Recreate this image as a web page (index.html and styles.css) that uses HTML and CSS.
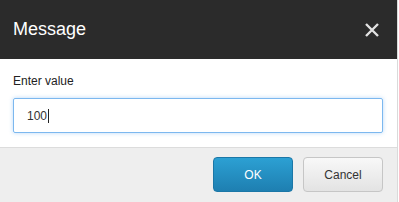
FILE: index.html
```html
<!DOCTYPE html>
<html>
<head>
<meta charset="utf-8">
<link rel="stylesheet" href="styles.css">
</head>
<body>
<div class="dialog">
  <div class="header">
    <div class="title">Message</div>
    <button class="close" aria-label="Close">
      <svg width="14" height="14" viewBox="0 0 14 14"><path d="M1 1 L13 13 M13 1 L1 13" stroke="#e2e2e2" stroke-width="2.4" fill="none"/></svg>
    </button>
  </div>
  <div class="content">
    <label class="label">Enter value</label>
    <div class="field" role="textbox">100<span class="caret"></span></div>
  </div>
  <div class="footer">
    <button class="btn btn-primary">OK</button>
    <button class="btn btn-default">Cancel</button>
  </div>
</div>
</body>
</html>
```
FILE: styles.css
```css
html, body {
  margin: 0;
  padding: 0;
  background: #fff;
}
body {
  width: 399px;
  height: 202px;
  overflow: hidden;
  font-family: "Liberation Sans", Arial, sans-serif;
}
.dialog {
  width: 398px;
  height: 202px;
  box-sizing: border-box;
  border-right: 1px solid #dadada;
  display: flex;
  flex-direction: column;
}
.header {
  height: 59px;
  flex: none;
  background: #2b2b2b;
  display: flex;
  align-items: center;
  padding: 0 18px 0 13px;
}
.title {
  color: #fff;
  font-size: 18px;
  flex: 1;
}
.close {
  background: none;
  border: 0;
  padding: 0;
  width: 14px;
  height: 14px;
  display: flex;
}
.content {
  background: #fff;
  padding: 15px 14px 14px 13px;
  display: flex;
  flex-direction: column;
  border-bottom: 1px solid #dcdcdc;
}
.label {
  font-size: 12px;
  line-height: 14px;
  color: #222;
  margin-bottom: 10px;
}
.field {
  box-sizing: border-box;
  width: 370px;
  height: 35px;
  border: 1px solid #7cb8ef;
  border-radius: 2px;
  box-shadow: 0 0 4px rgba(100, 170, 240, 0.45);
  padding: 0 13px;
  font-size: 12px;
  color: #333;
  display: flex;
  align-items: center;
}
.caret {
  display: inline-block;
  width: 1px;
  height: 14px;
  background: #222;
  margin-left: 1px;
}
.footer {
  flex: 1;
  background: #eeeeee;
  display: flex;
  justify-content: flex-end;
  align-items: flex-start;
  gap: 10px;
  padding: 9px 14px 0 0;
}
.btn {
  width: 80px;
  height: 35px;
  box-sizing: border-box;
  border-radius: 4px;
  font-family: "Liberation Sans", Arial, sans-serif;
  font-size: 12px;
  padding: 0;
  cursor: pointer;
}
.btn-primary {
  background: linear-gradient(#2ca0d3, #1e7fb1);
  border: 1px solid #1b77a7;
  color: #fff;
}
.btn-default {
  background: linear-gradient(#f8f8f8, #e3e3e3);
  border: 1px solid #c6c6c6;
  color: #333;
}
```
